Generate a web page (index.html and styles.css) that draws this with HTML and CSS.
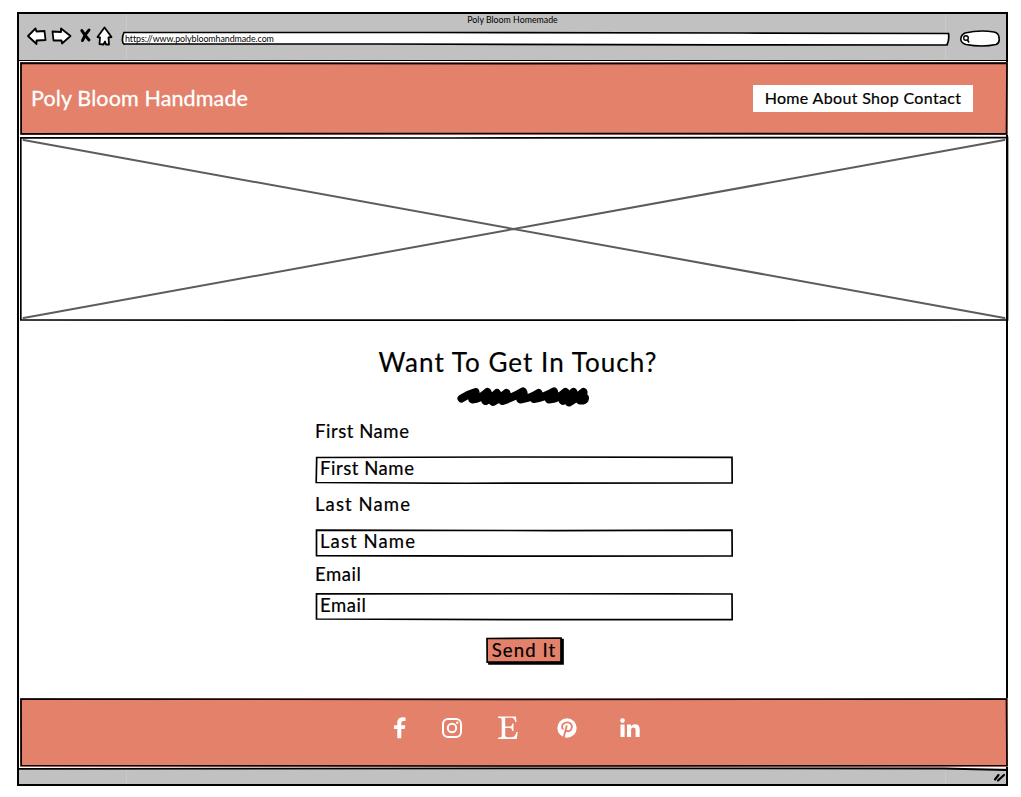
FILE: index.html
```html
<!DOCTYPE html>
<html lang="en">
<head>
<meta charset="utf-8">
<title>Poly Bloom Homemade</title>
<link rel="stylesheet" href="styles.css">
</head>
<body>
<div class="browser">
  <div class="chrome">
    <div class="window-title">Poly Bloom Homemade</div>
    <div class="toolbar">
      <svg class="nav-icons" width="90" height="24" viewBox="0 0 90 24" fill="#fff" stroke="#000" stroke-width="1.8" stroke-linejoin="round" stroke-linecap="round">
        <path d="M2 12 L9.500 4.500 L10.500 7.500 L18.500 7 L19.500 16 L10.500 16.500 L10.500 20 Z"/>
        <path d="M26.500 7.500 L35 8 L35 4.500 L44.500 12 L36 19.500 L35.500 16.500 L27.500 16.500 Z"/>
        <path d="M55.800 6.500 Q58.500 11 63 16" stroke-width="3"/><path d="M63 6 Q59 10 56.500 16.500" stroke-width="3"/>
        <path d="M78.500 3.500 L85.500 13 L82.500 13.500 L83 20.500 L80 20.500 L79 17.500 L77.500 20.500 L73.500 20 L74 13.500 L71.500 13 Z"/>
      </svg>
      <div class="address">
        <svg class="outline" viewBox="0 0 829 16"><path d="M3 1.500 Q1 6 1.500 10 Q2 13.500 4 13 L260 13 L600 13.800 L826 14 Q828.500 9 827.500 2.500 L620 2 L300 1.500 Z" fill="#fff" stroke="#000" stroke-width="1.700"/></svg>
        <span class="url">https://www.polybloomhandmade.com</span>
      </div>
      <svg class="search" width="42" height="20" viewBox="0 0 42 20" fill="#fff" stroke="#000" stroke-width="1.600">
        <path d="M5 4 Q20 .5 34 3 Q39 4 39 9 Q40 14 36 15.500 Q22 18.500 6 15.500 Q.8 14 .8 10 Q1 6 5 4Z"/>
        <circle cx="6" cy="9" r="2.300" stroke-width="1.400"/><path d="M7.500 11 L9 13.500"/>
      </svg>
    </div>
  </div>

  <header class="site-header">
    <svg class="outline" viewBox="0 0 988 73"><path d="M1 1.200 L500 1.600 L987 1.200 L986.500 71.800 L500 71.500 L1.200 71.800 Z"/></svg>
    <div class="brand">Poly Bloom Handmade</div>
    <nav class="menu"><span>Home About Shop Contact</span></nav>
  </header>

  <div class="hero">
    <svg class="outline" viewBox="0 0 989 185"><path d="M.8 1.800 L430 2 L987.500 1.500 L987.500 184 L560 184.200 L.8 184 Z"/><path class="cross" d="M3.500 4 L984.500 182 M3.500 182 L984.500 4"/></svg>
  </div>

  <main class="contact">
    <h1 class="heading">Want To Get In Touch?</h1>
    <svg class="scribble" width="134" height="20" viewBox="0 0 134 20" fill="none" stroke="#000" stroke-width="8" stroke-linecap="round" stroke-linejoin="round">
      <path d="M4.500 11.500 Q11 7 18.500 5 Q19 7 15.500 12.500 Q23 12 30.500 5 Q32 8 28.500 14 Q35 11 40 6 Q40 10 36 15 Q44 11 49.500 6 Q50 10 45.500 14 Q57 10 66 4.500 Q68 7 63.500 12.500 Q74 11 81.500 6 Q81 9 77 12 Q88 10 97 4.500 Q98 7 92 12.500 Q101 12 108.500 5 Q110 9 106 14 Q112 10 116.500 5 Q117 10 112 15.500 Q120 11 126.500 5 Q127 8 123 13.500 Q128 14 128 11"/>
    </svg>
    <form class="form">
      <label class="label first">First Name</label>
      <div class="field"><svg class="outline" viewBox="0 0 418 28"><path d="M1.700 1.500 L200 1 L417 1.400 L417.200 26.800 L150 27.300 L1.200 26.500 Z"/></svg>First Name</div>
      <label class="label last"><span class="wide">Last Name</span></label>
      <div class="field"><svg class="outline" viewBox="0 0 418 28"><path d="M1.500 1.200 L240 1.600 L417 1.200 L417.200 27 L200 27.200 L1.500 26.700 Z"/></svg><span class="wide">Last Name</span></div>
      <label class="label email">Email</label>
      <div class="field"><svg class="outline" viewBox="0 0 418 28"><path d="M1.500 .8 L240 .6 L417 1 L417.200 26.600 L200 26.600 L1.500 26 Z"/></svg>Email</div>
      <button class="send" type="button"><svg class="outline" viewBox="0 0 78 28"><path d="M2 2.500 H77 V27 H3Z" fill="#000"/><path d="M1 1.500 L75 1 L75 24.800 L1.200 25.200 Z" fill="#e3816b"/></svg><span class="send-text">Send It</span></button>
    </form>
  </main>

  <footer class="site-footer">
    <svg class="outline" viewBox="0 0 988 69"><path d="M1 1 L500 1.500 L986.500 1 L987 67.500 L500 68 L1.200 67.500 Z"/></svg>
    <svg class="facebook" width="14" height="22" viewBox="0 0 14 22" fill="#fff"><path d="M12.500 .5 V4 H10.500 Q8.300 4 8.300 6 V8.300 H12.300 L11.800 12 H8.300 V21.200 H4.300 V12 H1 V8.300 H4.300 V5.500 Q4.300 .5 9.300 .3 Z"/></svg>
    <svg class="instagram" width="20" height="20" viewBox="0 0 20 20" fill="none" stroke="#fff" stroke-width="2"><rect x="1" y="1" width="18" height="18" rx="5"/><circle cx="10" cy="10" r="4.200"/><circle cx="15.300" cy="4.800" r="1.200" fill="#fff" stroke="none"/></svg>
    <svg class="etsy" width="20" height="24" viewBox="0 0 20 24" fill="#fff"><path d="M0 .5 H18 L18.500 6 H17.300 Q16.500 2.200 14 1.800 H7.200 V10.500 H12 Q14 10.500 14.300 7.500 H15.500 V15 H14.300 Q14 12 12 12 H7.200 V19.500 Q7.200 21.300 9.500 21.300 H14 Q17.300 20.800 18.500 16 H19.700 L18.800 23 H0 V21.800 Q3.700 21.500 3.700 20 V3.500 Q3.700 1.800 0 1.700Z"/></svg>
    <svg class="pinterest" width="20" height="20" viewBox="0 0 20 20"><circle cx="10" cy="10" r="9.700" fill="#fff"/><path d="M6.500 20 L9.800 7.500 M6.200 11.400 Q3.800 8.500 6.500 5.700 Q9.500 3.200 13.200 5.200 Q16 7.500 14.200 11.200 Q12.300 14.500 9 12.500" fill="none" stroke="#e3816b" stroke-width="1.800"/></svg>
    <svg class="linkedin" width="20" height="20" viewBox="0 0 20 20" fill="#fff"><circle cx="2.500" cy="2.600" r="2.300"/><path d="M.5 6.500 H4.600 V19 H.5Z M7 6.500 H11 V8.300 Q12.500 6.200 15 6.200 Q19.700 6.200 19.700 11.500 V19 H15.600 V12 Q15.600 9.500 13.500 9.500 Q11.100 9.500 11.100 12.300 V19 H7Z"/></svg>
  </footer>

  <div class="status">
    <svg class="status-bar" width="988" height="18" viewBox="0 0 988 18">
      <path d="M0 1.500 H988 V18 H0Z" fill="#c1c1c1"/>
      <path d="M107.500 2 V18 M926.500 2 V18" stroke="#cacaca"/>
      <path d="M0 1.800 L500 1.300 L925 1.500 L988 3" fill="none" stroke="#000" stroke-width="1.800"/>
      <path d="M976 12.500 L979.500 8 M979 13.500 L985 8" stroke="#000" stroke-width="2.200" stroke-linecap="round"/>
    </svg>
  </div>
</div>
</body>
</html>
```
FILE: styles.css
```css
* { box-sizing: border-box; }
body {
  margin: 0;
  width: 1021px;
  height: 797px;
  padding: 12px 0 0 17px;
  background: #fff;
  color: #000;
  font-family: Lato, sans-serif;
  overflow: hidden;
}
svg { display: block; flex: none; }
.outline {
  position: absolute;
  inset: 0;
  width: 100%;
  height: 100%;
  fill: none;
  stroke: #000;
  stroke-width: 1.7px;
}
.browser {
  width: 991px;
  height: 774px;
  border: 2px solid #000;
  display: flex;
  flex-direction: column;
}
.chrome {
  height: 47px;
  flex: none;
  background:
    linear-gradient(#cacaca, #cacaca) 107px 0 / 1px 100% no-repeat,
    linear-gradient(#cacaca, #cacaca) 926px 0 / 1px 100% no-repeat,
    #c1c1c1;
  border-bottom: 1px solid #000;
}
.window-title {
  height: 12px;
  line-height: 12px;
  font-size: 8.8px;
  text-align: center;
}
.toolbar { display: flex; padding-left: 7px; align-items: flex-start; }
.nav-icons { margin-top: -2px; }
.address { position: relative; width: 829px; height: 16px; margin: 5px 10px 0 5px; }
.url { position: relative; display: block; padding-left: 4px; font-size: 8.9px; line-height: 15px; letter-spacing: -0.08px; white-space: nowrap; }
.search { margin-top: 3px; }
.site-header {
  position: relative;
  height: 73px;
  flex: none;
  margin: 1px -2px 0 1px;
  background: #e3816b;
  display: flex;
  align-items: center;
  justify-content: space-between;
  padding: 0 35px 0 11px;
}
.brand { position: relative; margin-top: -2px; color: #fff; font-size: 21.5px; line-height: 26px; letter-spacing: 0.13px; -webkit-text-stroke: 0.3px #fff; }
.menu { position: relative; width: 220px; height: 27px; background: #fff; font-size: 16px; line-height: 25px; letter-spacing: 0.34px; text-align: center; white-space: nowrap; -webkit-text-stroke: 0.2px #000; }
.hero {
  position: relative;
  height: 185px;
  flex: none;
  margin: 1px -3px 0 1px;
}
.cross { stroke: #5c5c5c; stroke-width: 2px; stroke-linecap: round; }
.contact {
  height: 377px;
  flex: none;
  display: flex;
  flex-direction: column;
  align-items: center;
  -webkit-text-stroke: 0.2px #000;
}
.heading { margin: 25px 0 0; font-size: 26px; font-weight: 400; line-height: 32px; letter-spacing: 1.05px; padding-left: 11px; }
.scribble { margin: 9px 0 0 22px; }
.form { width: 418px; margin-left: 23px; display: flex; flex-direction: column; font-size: 18.5px; letter-spacing: 0.55px; }
.label { height: 24px; line-height: 24px; }
.label.first { margin: 12px 0 13px; }
.label.last { margin: 8px 0 13px; }
.label.email { margin: 5px 0 7px; }
.wide { letter-spacing: 1.1px; }
.field { position: relative; height: 28px; padding-left: 5px; line-height: 25px; }
.send {
  position: relative;
  width: 78px;
  height: 28px;
  margin: 16px 0 0 171px;
  padding: 0 2px 3px 0;
  border: 0;
  background: none;
  color: #000;
  font: 18.5px/22px Lato, sans-serif;
  letter-spacing: 1.1px;
  -webkit-text-stroke: 0.2px #000;
}
.send-text { position: relative; }
.site-footer {
  position: relative;
  height: 69px;
  flex: none;
  margin: 0 -2px 0 1px;
  background: #e3816b;
  display: flex;
  align-items: center;
  padding: 0 0 9px 373px;
}
.instagram { margin-left: 35px; }
.etsy { margin-left: 36px; }
.pinterest { margin-left: 39px; }
.linkedin { margin-left: 43px; }
.status { flex: 1; overflow: hidden; }
```
